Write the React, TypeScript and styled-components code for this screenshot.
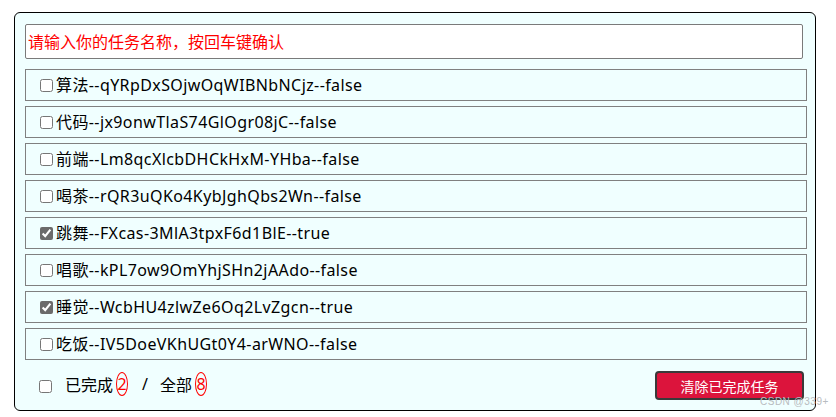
import React from 'react';
import styled, { createGlobalStyle } from 'styled-components';

const GlobalStyle = createGlobalStyle`
  body {
    margin: 0;
    background: #ffffff;
    font-family: "Noto Sans", "Noto Sans CJK SC", sans-serif;
  }
`;

const Wrapper = styled.div`
  position: relative;
  width: 836px;
  height: 417px;
  padding: 12px 0 0 14px;
  box-sizing: border-box;
`;

const TodoBox = styled.div`
  width: 802px;
  height: 399px;
  box-sizing: border-box;
  border: 1px solid #000;
  border-radius: 6px;
  background: #f0ffff;
  padding: 11px 8px 10px 10px;
  display: flex;
  flex-direction: column;
`;

const TaskInput = styled.input`
  width: 778px;
  height: 35px;
  box-sizing: border-box;
  border: 1px solid #7a7a7a;
  border-radius: 2px;
  background: #fff;
  padding: 0 2px;
  margin: 0 0 10px 0;
  font-size: 16px;
  font-family: "Noto Sans", "Noto Sans CJK SC", sans-serif;
  outline: none;

  &::placeholder {
    color: #ff0000;
  }
`;

const List = styled.ul`
  list-style: none;
  margin: 0;
  padding: 0;
  display: flex;
  flex-direction: column;
  gap: 5px;
`;

const Item = styled.li`
  width: 782px;
  height: 32px;
  box-sizing: border-box;
  border: 1px solid #808080;
  background: #f0ffff;
  display: flex;
  align-items: center;
  padding: 0 0 2px 10px;
  font-size: 16px;
  letter-spacing: 0.4px;
  color: #000;
`;

const Check = styled.input`
  width: 13px;
  height: 13px;
  margin: 2px 3px 0 4px;
  accent-color: #6b6b6b;
`;

const Footer = styled.div`
  margin-top: 11px;
  width: 779px;
  height: 29px;
  display: flex;
  align-items: center;
  padding-left: 10px;
  box-sizing: border-box;
  font-size: 16px;
  color: #000;
`;

const Summary = styled.div`
  display: flex;
  align-items: center;
  padding-bottom: 3px;
`;

const FooterLabel = styled.span`
  margin-left: 10px;
`;

const Count = styled.span`
  display: inline-flex;
  align-items: center;
  justify-content: center;
  width: 10px;
  height: 22px;
  margin: 0 3px;
  border: 1px solid #ff0000;
  border-radius: 50%;
  color: #ff0000;
  font-size: 16px;
  line-height: 1;
`;

const Slash = styled.span`
  margin: 0 12px 0 11px;
`;

const ClearButton = styled.button`
  margin-left: auto;
  width: 149px;
  height: 29px;
  box-sizing: border-box;
  border: 2px solid #3a3a3a;
  border-radius: 4px;
  background: #dc143c;
  color: #fff;
  font-size: 14px;
  font-family: "Noto Sans", "Noto Sans CJK SC", sans-serif;
  cursor: pointer;
`;

const Watermark = styled.span`
  position: absolute;
  left: 760px;
  top: 396px;
  font-size: 10px;
  font-family: "Liberation Sans", sans-serif;
  color: #b8bcc0;
  letter-spacing: 0.5px;
`;

interface Todo {
  id: string;
  title: string;
  done: boolean;
}

const todos: Todo[] = [
  { id: 'qYRpDxSOjwOqWIBNbNCjz', title: '算法', done: false },
  { id: 'jx9onwTlaS74GlOgr08jC', title: '代码', done: false },
  { id: 'Lm8qcXlcbDHCkHxM-YHba', title: '前端', done: false },
  { id: 'rQR3uQKo4KybJghQbs2Wn', title: '喝茶', done: false },
  { id: 'FXcas-3MlA3tpxF6d1BlE', title: '跳舞', done: true },
  { id: 'kPL7ow9OmYhjSHn2jAAdo', title: '唱歌', done: false },
  { id: 'WcbHU4zlwZe6Oq2LvZgcn', title: '睡觉', done: true },
  { id: 'IV5DoeVKhUGt0Y4-arWNO', title: '吃饭', done: false },
];

const App: React.FC = () => {
  const doneCount = todos.filter(t => t.done).length;

  return (
    <Wrapper>
      <GlobalStyle />
      <TodoBox>
        <TaskInput type="text" placeholder="请输入你的任务名称，按回车键确认" />
        <List>
          {todos.map(todo => (
            <Item key={todo.id}>
              <Check type="checkbox" defaultChecked={todo.done} />
              {`${todo.title}--${todo.id}--${todo.done}`}
            </Item>
          ))}
        </List>
        <Footer>
          <Check type="checkbox" />
          <Summary>
            <FooterLabel>已完成</FooterLabel>
            <Count>{doneCount}</Count>
            <Slash>/</Slash>
            <span>全部</span>
            <Count>{todos.length}</Count>
          </Summary>
          <ClearButton>清除已完成任务</ClearButton>
        </Footer>
      </TodoBox>
      <Watermark>CSDN @339+</Watermark>
    </Wrapper>
  );
};

export default App;
